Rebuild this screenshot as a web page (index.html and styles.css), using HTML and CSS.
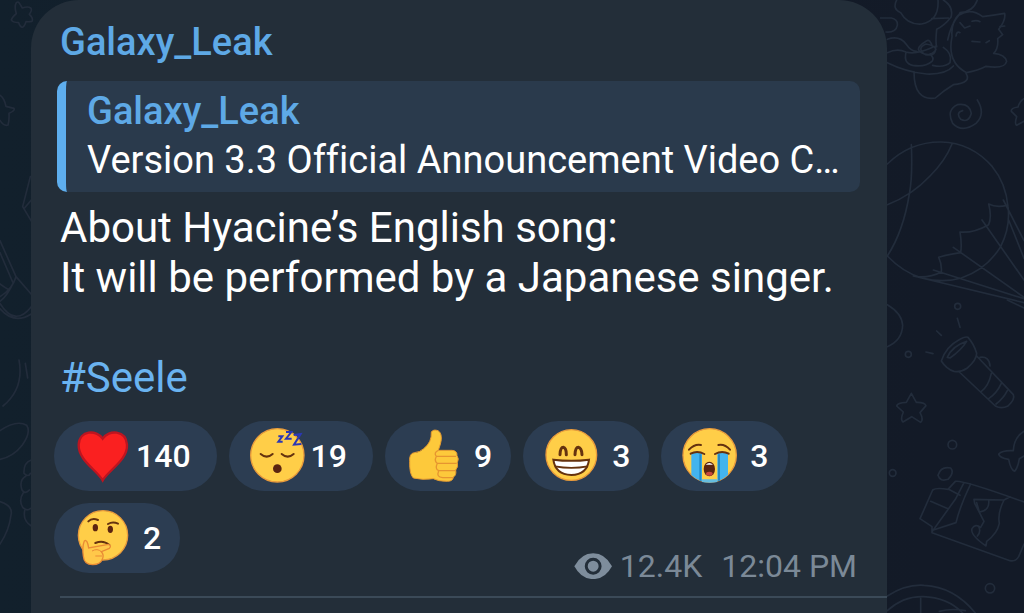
FILE: index.html
```
<!DOCTYPE html>
<html lang="en">
<head>
    <meta charset="utf-8">
    <meta name="viewport" content="width=device-width, initial-scale=1">
    <title>Galaxy_Leak</title>
    <link rel="stylesheet" href="styles.css">
</head>
<body>
    <!-- wallpaper doodles -->
    <svg class="doodles left" viewBox="0 0 180 1839" aria-hidden="true">
        <path d="M57 8L67 24Q84 18 92 24Q98 29 88 43Q101 55 96 64Q87 66 78 65Q72 82 66 82Q60 80 56 68Q37 67 34 60Q36 52 49 41Q42 20 49 8Q54 4 57 8Z"/>
        <path d="M0 286Q12 293 18 319L42 325Q46 332 27 340Q28 362 24 375Q12 380 0 361"/>
        <path d="M91 530L68 620L95 665M73 625L94 600M0 722L48 830L96 885M0 758L38 846M48 830Q38 866 0 890M40 848Q22 888 0 904M0 852Q18 865 28 870"/>
        <path d="M0 926Q42 975 94 942M0 910Q45 982 94 920M57 1080Q73 1165 9 1218M76 1090L83 1134M0 1292Q50 1258 80 1276Q94 1297 67 1335Q40 1370 0 1378"/>
        <path d="M94 1380Q70 1388 72 1420Q86 1433 91 1420M78 1428Q56 1440 66 1470Q75 1484 88 1470M70 1478Q55 1500 68 1522Q80 1535 92 1525M74 1532Q68 1562 94 1578M0 1505Q40 1518 33 1545Q28 1590 0 1632"/>
    </svg>
    <svg class="doodles right" viewBox="0 0 432 1839" aria-hidden="true">
        <!-- sleeping cat -->
        <path d="M50 0Q36 28 62 38Q82 75 125 72Q178 62 174 0M0 54H34Q54 58 52 76Q48 98 18 96M190 0Q222 20 213 52Q192 78 170 88Q166 130 170 140M155 56L205 54M203 120Q214 70 236 46Q272 22 308 50Q340 46 374 40Q378 60 356 88L368 104L353 116Q356 146 341 160Q375 163 380 184Q374 208 318 199Q294 212 260 218Q200 188 216 110Q212 65 240 40M240 38Q280 35 292 0"/>
        <path d="M240 68L254 84L270 78M228 108Q230 92 240 98M276 64Q290 59 300 65M276 124L300 126M318 128L328 122M360 80L374 78M22 118Q58 105 78 132Q94 155 110 154M22 158Q52 144 78 156Q108 165 158 142Q150 114 138 124Q108 142 118 154Q150 176 168 148Q164 136 138 132Q108 145 136 164Q172 170 166 138M78 158Q70 190 98 196Q136 202 156 184Q164 174 150 162M190 142Q218 160 210 188Q192 204 158 196M22 188Q78 216 140 222Q198 224 220 198M102 215Q102 304 166 294Q190 272 220 254Q276 248 258 220"/>
        <path d="M292 300Q318 342 288 370Q246 400 218 370Q198 330 232 314Q268 308 274 340Q266 370 242 358Q226 338 248 332M432 296Q420 302 414 321Q392 324 394 334L410 350Q403 372 410 376L432 364"/>
        <!-- parachute -->
        <path d="M22 492Q90 425 184 426Q274 428 337 500Q378 550 384 620Q392 680 362 740Q320 808 244 834Q190 850 126 834Q70 818 22 768M22 614Q96 586 150 528Q196 482 216 432M94 434Q98 532 88 582Q70 694 22 768M108 830Q150 834 184 816Q186 792 176 772Q200 764 242 758Q246 732 240 696Q280 700 326 674Q336 650 326 612Q350 624 380 616M370 600L432 722M386 660L432 775M306 660L432 840M220 742L432 892M160 810L432 896M100 828L432 908"/>
        <circle cx="233" cy="919" r="9"/>
        <path d="M22 914Q66 940 68 976Q66 1022 22 1040M232 955L240 982M170 993L184 1006M138 1056L159 1061M382 900L432 924"/>
        <circle cx="85" cy="1063" r="9"/>
        <!-- torch -->
        <path d="M184 1083Q198 1040 236 1020Q256 1008 264 1012Q282 1032 290 1060Q290 1080 262 1104Q242 1118 222 1114Q200 1108 184 1083ZM202 1072Q216 1038 260 1024Q244 1050 210 1074ZM238 1116L346 1218Q364 1228 384 1218Q406 1198 400 1184L290 1068M300 1072Q328 1068 330 1098M304 1174Q326 1158 334 1120M326 1196Q350 1180 364 1150M348 1212Q370 1196 382 1172"/>
        <path d="M94 1180L109 1207Q134 1206 138 1217L120 1238Q132 1260 122 1267L95 1250L69 1266Q60 1260 70 1236L50 1218Q52 1208 79 1207Z"/>
        <circle cx="217" cy="1334" r="13"/><circle cx="38" cy="1419" r="10"/><circle cx="330" cy="1765" r="14"/>
        <path d="M432 1294Q402 1312 400 1352Q368 1350 356 1362Q358 1374 386 1378Q392 1410 404 1414Q414 1402 418 1376L432 1368M174 1426Q182 1398 212 1404Q224 1418 204 1438Q180 1446 174 1426"/>
        <!-- candy box -->
        <path d="M120 1556L158 1470Q168 1462 204 1468L226 1444Q250 1440 432 1506M120 1556L156 1580V1598L390 1682Q406 1686 416 1670L432 1632M156 1595L226 1498L252 1448M160 1590L228 1568Q240 1518 272 1452M152 1504L204 1526M206 1468L240 1486M282 1498L372 1500Q352 1540 358 1570Q352 1600 320 1624L318 1638Q270 1605 276 1586Q286 1570 302 1582L312 1564L284 1510ZM290 1508L298 1536Q330 1532 326 1500M292 1608Q304 1594 296 1580M390 1490L372 1500"/>
        <path d="M22 1788Q78 1752 132 1756Q222 1760 286 1839M22 1832Q70 1788 130 1790Q202 1792 248 1839M122 1794V1839M178 1834Q214 1824 256 1832"/>
    </svg>

    <main class="message">
        <a class="author" href="#">Galaxy_Leak</a>
        <a class="reply" href="#">
            <span class="reply-author">Galaxy_Leak</span>
            <span class="reply-text">Version 3.3 Official Announcement Video C…</span>
        </a>
        <p class="text">About Hyacine’s English song:<br>It will be performed by a Japanese singer.<br><br><a href="#">#Seele</a></p>

        <div class="reactions">
            <button class="reaction" aria-label="Heart 140">
                <svg viewBox="102 48 171 180">
                    <path d="M188 86C170 58 118 60 116 104C114 150 170 180 188 211C206 180 264 150 261 104C258 60 206 58 188 86Z" fill="#fa2020" stroke="#bd1520" stroke-width="7"/>
                </svg>
                <span>140</span>
            </button>
            <button class="reaction" aria-label="Sleeping 19">
                <svg viewBox="627 48 171 180">
                    <circle class="face" cx="712" cy="136" r="80"/>
                    <path class="line" d="M662 132Q680 148 698 132M725 132Q743 148 761 132"/>
                    <ellipse cx="712" cy="176" rx="13" ry="13" fill="#5b2410"/>
                    <path class="zzz" d="M715 79H727L715 95H728M738 66H754L738 86H755M761 75L782 72L762 104L784 102"/>
                </svg>
                <span>19</span>
            </button>
            <button class="reaction single" aria-label="Thumbs up 9">
                <svg viewBox="105 48 171 180">
                    <path d="M184 66Q190 57 204 62Q215 68 214 88Q213 100 205 121H246Q262 122 261 137Q268 146 262 158Q266 170 257 180Q260 196 250 201Q249 214 232 214Q205 214 190 206Q158 211 130 204Q118 192 119 155Q117 130 133 128Q150 127 161 116Q186 97 184 66Z" fill="#fdc93b" stroke="#e59a32" stroke-width="3"/>
                    <path d="M205 121Q190 128 199 139H258M199 139Q192 154 202 160H260M202 160Q194 177 206 182H255M206 182Q198 202 218 203H249" fill="none" stroke="#e69530" stroke-width="4"/>
                </svg>
                <span>9</span>
            </button>
            <button class="reaction single" aria-label="Grinning 3">
                <svg viewBox="522 48 171 180">
                    <circle class="face" cx="607" cy="135" r="76"/>
                    <path class="brow" d="M573 134Q574 112 583 112Q592 114 592 134M618 134Q619 112 628 112Q638 114 639 134"/>
                    <path d="M553 149Q607 156 660 149Q655 194 607 195Q559 194 553 149Z" fill="#fff" stroke="#65320f" stroke-width="6"/>
                    <path d="M558 169Q607 178 656 169" fill="none" stroke="#65320f" stroke-width="5"/>
                </svg>
                <span>3</span>
            </button>
            <button class="reaction single" aria-label="Crying 3">
                <svg viewBox="936 48 171 180">
                    <circle class="face" cx="1022" cy="136" r="80"/>
                    <path d="M967 130Q983 124 999 130V214Q982 209 967 195ZM1045 130Q1061 124 1077 130V195Q1061 209 1045 214Z" fill="#43b4ee"/>
                    <path d="M994 133V212M1050 133V212" fill="none" stroke="#238bc7" stroke-width="6"/>
                    <path class="line" d="M960 119Q977 101 996 105M1048 105Q1067 101 1083 119M965 131Q985 120 1006 132M1038 132Q1059 120 1079 131"/>
                    <path d="M999 216Q1022 221 1045 216V208H999Z" fill="#65bde0"/>
                    <ellipse cx="1021" cy="177" rx="17" ry="22" fill="#5b2410"/>
                    <ellipse cx="1021" cy="191" rx="10" ry="6" fill="#c9483c"/>
                    <path d="M1010 164Q1021 154 1032 164Z" fill="#fff"/>
                </svg>
                <span>3</span>
            </button>
            <button class="reaction single" aria-label="Thinking 2">
                <svg viewBox="102 294 171 180">
                    <circle class="face" cx="189" cy="376" r="74"/>
                    <path class="line" d="M145 334Q156 323 174 330M204 342Q218 334 234 341M166 399Q190 389 208 405"/>
                    <ellipse cx="166" cy="353" rx="8" ry="11" fill="#5b2410"/>
                    <ellipse cx="211" cy="358" rx="8" ry="11" fill="#5b2410"/>
                    <path d="M133 393Q142 386 146 414L205 403Q216 407 208 415L184 425Q193 434 187 448Q181 464 158 464Q132 464 130 438Q126 410 133 393Z" fill="#ffc84a" stroke="#e98b35" stroke-width="4"/>
                    <path d="M156 423Q172 414 184 425M166 438H186" fill="none" stroke="#e98b35" stroke-width="3"/>
                </svg>
                <span>2</span>
            </button>
        </div>

        <div class="meta">
            <svg viewBox="40 65 115 80" aria-hidden="true">
                <path d="M41 105Q62 66 98 66Q134 66 155 105Q134 144 98 144Q62 144 41 105Z" fill="#7e8d9c"/>
                <circle cx="98" cy="105" r="21" fill="none" stroke="#232e39" stroke-width="9"/>
            </svg>
            <span>12.4K</span>
            <time>12:04 PM</time>
        </div>
        <hr>
    </main>
</body>
</html>
```
FILE: styles.css
```
*{
    box-sizing: border-box;
}
body{
    margin: 0;
    min-height: 100vh;
    display: flex;
    overflow: hidden;
    position: relative;
    background: linear-gradient(90deg, #12202c 0, #131a27 90%);
    font-family: Roboto, "Noto Sans", sans-serif;
    color: #fff;
}
a{
    color: #6ab3f0;
    text-decoration: none;
}
.doodles{
    position: absolute;
    top: 0;
    fill: none;
    stroke: #222c3b;
    stroke-width: 5;
    stroke-linecap: round;
    stroke-linejoin: round;
}
.left{
    left: 0;
    width: 60px;
}
.right{
    right: 0;
    width: 144px;
}
.message{
    position: relative;
    flex: 1;
    min-width: 0;
    margin: 0 137px 0 31px;
    padding: 20px 0 0 29px;
    border-radius: 48px 48px 0 0;
    background: #232e39;
    display: flex;
    flex-direction: column;
}
.author, .reply-author{
    font-size: 38px;
    line-height: 44px;
    font-weight: 500;
    color: #5ea9e6;
}
.reply{
    display: flex;
    flex-direction: column;
    margin: 17px 27px 0 -3px;
    padding: 8px 16px 5px 21px;
    border-left: 9px solid #5eaeee;
    border-radius: 10px;
    background: #2a3a4c;
}
.reply-text{
    font-size: 38px;
    line-height: 54px;
    color: #fff;
    white-space: nowrap;
    overflow: hidden;
    text-overflow: ellipsis;
    font-variant-ligatures: none;
}
.text{
    margin: 11px 0 0;
    font-size: 42px;
    line-height: 50px;
}
.reactions{
    display: flex;
    flex-wrap: wrap;
    gap: 12px;
    margin: 18px 80px 0 -6px;
}
.reaction{
    display: flex;
    align-items: center;
    gap: 5px;
    height: 70px;
    padding: 0 26px 0 20px;
    border: 0;
    border-radius: 35px;
    background: #2c3d52;
    color: #fff;
    font: 500 32px Roboto, "Noto Sans", sans-serif;
}
.reaction svg{
    width: 57px;
    height: 60px;
}
.single{
    gap: 12px;
    padding-right: 19px;
}
.face{
    fill: #ffce48;
    stroke: #e99b3c;
    stroke-width: 4;
}
.line, .brow{
    fill: none;
    stroke: #65320f;
    stroke-width: 6;
    stroke-linecap: round;
}
.brow{
    stroke-width: 9;
}
.zzz{
    fill: none;
    stroke: #2c38b4;
    stroke-width: 6;
}
.meta{
    display: flex;
    justify-content: flex-end;
    align-items: center;
    margin: -26px 30px 0 0;
    font-size: 32px;
    line-height: 38px;
    color: #7b8997;
}
.meta svg{
    width: 38px;
    margin-right: 8px;
}
.meta time{
    margin-left: 19px;
}
hr{
    width: 100%;
    height: 2px;
    margin: 11px 0 15px;
    border: 0;
    background: #3b4a58;
}
```
